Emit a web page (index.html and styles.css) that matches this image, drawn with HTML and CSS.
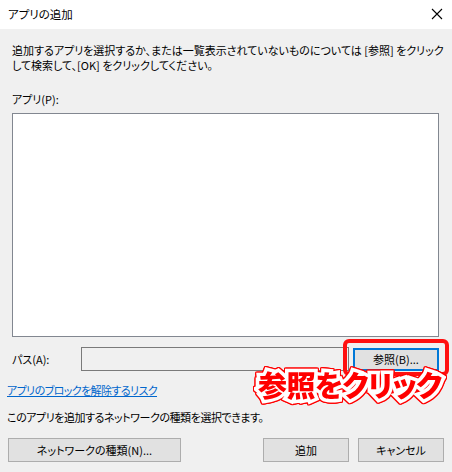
FILE: index.html
```html
<!DOCTYPE html>
<html lang="ja">
<head>
    <meta charset="UTF-8">
    <title>アプリの追加</title>
    <link rel="stylesheet" href="styles.css">
</head>
<body>
    <div class="dialog">
        <div class="titlebar">
            <span class="title">アプリの追加</span>
            <svg class="close" width="12" height="12" viewBox="0 0 12 12">
                <path d="M1 1 L11 11 M11 1 L1 11" stroke="#000" stroke-width="1.1" fill="none"/>
            </svg>
        </div>

        <div class="body">
            <p class="desc">追加するアプリを選択するか、または一覧表示されていないものについては [参照] をクリック<br>して検索して、[OK] をクリックしてください。</p>

            <div class="label">アプリ(P):</div>
            <div class="listbox"></div>

            <div class="path-row">
                <span class="path-label">パス(A):</span>
                <div class="path-input"></div>
                <button class="btn browse">参照(B)...</button>
            </div>

            <a class="risk-link" href="#">アプリのブロックを解除するリスク</a>
            <p class="note">このアプリを追加するネットワークの種類を選択できます。</p>

            <div class="actions">
                <button class="btn network">ネットワークの種類(N)...</button>
                <div class="right-actions">
                    <button class="btn">追加</button>
                    <button class="btn">キャンセル</button>
                </div>
            </div>
        </div>

        <!-- annotation -->
        <div class="callout-box"></div>
        <div class="callout-text">参照をクリック</div>
    </div>
</body>
</html>
```

FILE: styles.css
```css
* {
    box-sizing: border-box;
}
body {
    margin: 0;
    font-family: "Noto Sans CJK JP", "Noto Sans", sans-serif;
    font-size: 11px;
    font-feature-settings: "palt";
    color: #000;
    background: #f0f0f0;
}
.dialog {
    position: relative;
    width: 452px;
    height: 472px;
    background: #f0f0f0;
    overflow: hidden;
}
.titlebar {
    height: 29px;
    background: #fff;
    display: flex;
    align-items: center;
    justify-content: space-between;
    padding: 0 9px 2px 8px;
    font-size: 11.5px;
}
.body {
    padding: 14px 13px 0 12px;
}
.desc {
    margin: 0;
    line-height: 15px;
    white-space: nowrap;
}
.label {
    margin-top: 19px;
    line-height: 14px;
}
.listbox {
    margin-top: 7px;
    height: 224px;
    background: #fff;
    border: 1px solid #828790;
}
.path-row {
    display: flex;
    align-items: center;
    margin-top: 10px;
    height: 24px;
}
.path-label {
    width: 69px;
}
.path-input {
    width: 268px;
    height: 24px;
    border: 1px solid #7a7a7a;
    background: #f0f0f0;
}
.btn {
    font-family: inherit;
    font-size: 11px;
    font-feature-settings: "palt";
    color: #000;
    background: #e1e1e1;
    border: 1px solid #adadad;
    height: 24px;
    width: 86px;
    padding: 0;
}
.browse {
    margin-left: 4px;
    height: 23px;
    border: 2px solid #0078d7;
}
.risk-link {
    display: block;
    margin: 12px 0 0 -5px;
    width: max-content;
    line-height: 15px;
    letter-spacing: -0.6px;
    color: #0066cc;
}
.note {
    margin: 12px 0 0 -5px;
    line-height: 15px;
    letter-spacing: -0.45px;
}
.actions {
    display: flex;
    justify-content: space-between;
    margin: 13px -5px 0 -4px;
}
.network {
    width: 173px;
}
.right-actions {
    display: flex;
    gap: 9px;
}
.callout-box {
    position: absolute;
    left: 343px;
    top: 339px;
    width: 106px;
    height: 37px;
    border: 4px solid #ff1010;
    border-radius: 6px;
}
.callout-text {
    position: absolute;
    left: 258px;
    top: 370px;
    font-size: 29px;
    font-weight: 900;
    font-feature-settings: "palt";
    letter-spacing: -0.5px;
    line-height: 28px;
    color: #ff0000;
    -webkit-text-stroke: 7px #fff;
    paint-order: stroke fill;
    filter: drop-shadow(1px 0 0 #f00) drop-shadow(-1px 0 0 #f00) drop-shadow(0 1px 0 #f00) drop-shadow(0 -1px 0 #f00);
}
```
